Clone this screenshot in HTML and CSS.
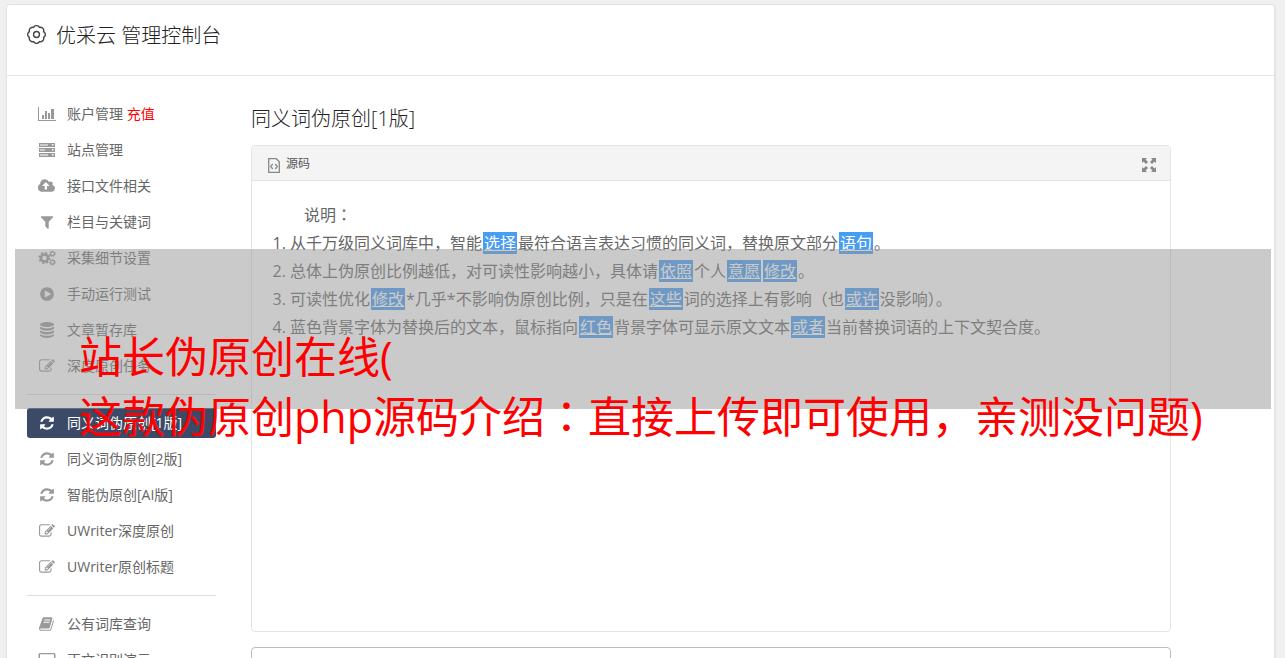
FILE: index.html
```html
<!DOCTYPE html>
<html lang="zh-CN">
<head>
    <meta charset="UTF-8">
    <meta name="viewport" content="width=device-width, initial-scale=1.0">
    <title>优采云 管理控制台</title>
    <link rel="stylesheet" href="styles.css">
</head>
<body>
    <svg class="sprite" aria-hidden="true">
        <symbol id="gear" viewBox="0 0 18 18">
            <path fill="none" stroke="currentColor" stroke-width="1.3" d="M15.74 6.21A3.2 3.2 0 0 1 15.74 11.79A3.2 3.2 0 0 1 11.79 15.74A3.2 3.2 0 0 1 6.21 15.74A3.2 3.2 0 0 1 2.26 11.79A3.2 3.2 0 0 1 2.26 6.21A3.2 3.2 0 0 1 6.21 2.26A3.2 3.2 0 0 1 11.79 2.26A3.2 3.2 0 0 1 15.74 6.21Z"/>
            <circle cx="9" cy="9" r="2.800" fill="none" stroke="currentColor" stroke-width="1.3"/>
        </symbol>
        <symbol id="chart" viewBox="0 0 18 16">
            <path d="M0 1h1v13h17v1H0zM4 9h2v4H4zM7 5h2v8H7zM10 7h2v6h-2zM13 3h3v10h-3z"/>
        </symbol>
        <symbol id="server" viewBox="0 0 18 16">
            <path fill-rule="evenodd" d="M1 1h16v4H1zM1 6h16v4H1zM1 11h16v4H1zM2 2.500h8v1H2zM2 7.500h5v1H2zM2 12.500h8v1H2zM14 2h1.500v1.500H14zM14 7h1.500v1.500H14zM14 12h1.500v1.500H14z"/>
        </symbol>
        <symbol id="cloud" viewBox="0 0 1920 1792">
            <path d="M1216 864q0-14-9-23l-352-352q-9-9-23-9t-23 9l-351 351q-10 12-10 24 0 14 9 23t23 9h224v352q0 13 9.500 22.500t22.500 9.500h192q13 0 22.500-9.500t9.500-22.500v-352h224q13 0 22.500-9.500t9.500-22.500zm640 288q0 159-112.500 271.500t-271.500 112.500h-1088q-185 0-316.500-131.500t-131.500-316.500q0-130 70-240t188-165q-2-30-2-43 0-212 150-362t362-150q156 0 285.500 87t188.500 231q71-62 166-62 106 0 181 75t75 181q0 76-41 138 130 31 213.500 135.500t83.500 238.500z"/>
        </symbol>
        <symbol id="filter" viewBox="0 0 1792 1792">
            <path d="M1595 295q17 41-14 70l-493 493v742q0 42-39 59-13 5-25 5-27 0-45-19l-256-256q-19-19-19-45v-486l-493-493q-31-29-14-70 17-39 59-39h1280q42 0 59 39z"/>
        </symbol>
        <symbol id="cogs" viewBox="0 0 18 16">
            <g fill="none" stroke="currentColor">
                <circle cx="6.500" cy="8" r="3.500" stroke-width="2.600"/>
                <circle cx="6.500" cy="8" r="5.200" stroke-width="1.800" stroke-dasharray="2.040"/>
                <circle cx="14.500" cy="3.700" r="1.900" stroke-width="1.300"/>
                <circle cx="14.500" cy="3.700" r="2.800" stroke-width="1" stroke-dasharray="1.260"/>
                <circle cx="14.500" cy="12.300" r="1.900" stroke-width="1.300"/>
                <circle cx="14.500" cy="12.300" r="2.800" stroke-width="1" stroke-dasharray="1.260"/>
            </g>
        </symbol>
        <symbol id="play" viewBox="0 0 1792 1792">
            <path fill-rule="evenodd" d="M896 128q209 0 385.500 103t279.500 279.500 103 385.500-103 385.500-279.500 279.500-385.500 103-385.500-103-279.500-279.500-103-385.500 103-385.500 279.500-279.500 385.500-103zm384 823q32-18 32-55t-32-55l-544-320q-31-19-64-1-32 19-32 56v640q0 37 32 56 16 8 32 8 17 0 32-9z"/>
        </symbol>
        <symbol id="database" viewBox="0 0 16 16">
            <ellipse cx="8" cy="2.500" rx="7" ry="2.500"/>
            <path d="M1 4.500c2 2.400 12 2.400 14 0v2c-2 3-12 3-14 0zM1 8.300c2 2.400 12 2.400 14 0v2c-2 3-12 3-14 0zM1 12c2 2.400 12 2.400 14 0v1.600c-2 3.200-12 3.200-14 0z"/>
        </symbol>
        <symbol id="edit" viewBox="0 0 1792 1792">
            <path d="M888 1184l116-116-152-152-116 116v56h96v96h56zm440-720q-16-16-33 1l-350 350q-17 17-1 33t33-1l350-350q17-17 1-33zm80 594v190q0 119-84.500 203.500t-203.500 84.500h-832q-119 0-203.500-84.500t-84.500-203.500v-832q0-119 84.500-203.500t203.500-84.500h832q63 0 117 25 15 7 18 23 3 17-9 29l-49 49q-14 14-32 8-23-6-45-6h-832q-66 0-113 47t-47 113v832q0 66 47 113t113 47h832q66 0 113-47t47-113v-126q0-13 9-22l64-64q15-15 35-7t20 29zm-96-738l288 288-672 672h-288v-288zm444 132l-92 92-288-288 92-92q28-28 68-28t68 28l152 152q28 28 28 68t-28 68z"/>
        </symbol>
        <symbol id="refresh" viewBox="0 0 1792 1792">
            <path d="M1639 1056q0 5-1 7-64 268-268 434.500t-478 166.500q-146 0-282.500-55t-243.500-157l-129 129q-19 19-45 19t-45-19-19-45v-448q0-26 19-45t45-19h448q26 0 45 19t19 45-19 45l-137 137q71 66 161 102t187 36q134 0 250-65t186-179q11-17 53-117 8-23 30-23h192q13 0 22.500 9.500t9.500 22.500zm25-800v448q0 26-19 45t-45 19h-448q-26 0-45-19t-19-45 19-45l138-138q-148-137-349-137-134 0-250 65t-186 179q-11 17-53 117-8 23-30 23h-199q-13 0-22.500-9.500t-9.500-22.500v-7q65-268 270-434.500t480-166.500q146 0 284 55.500t245 156.500l130-129q19-19 45-19t45 19 19 45z"/>
        </symbol>
        <symbol id="book" viewBox="0 0 1792 1792">
            <path d="M1639 478q40 57 18 129l-275 906q-19 64-76.500 107.500t-122.500 43.500h-923q-77 0-148.500-53.500t-99.500-131.500q-24-67-2-127 0-4 3-27t4-37q1-8-3-21.500t-3-19.500q2-11 8-21t16.500-23.500 16.500-23.500q23-38 45-91.500t30-91.500q3-10 .5-30t-.5-28q3-11 17-28t17-23q21-36 42-92t25-90q1-9-2.500-32t.5-28q4-13 22-30.500t22-22.500q19-26 42.500-84.500t27.500-96.500q1-8-3-25.500t-2-26.500q2-8 9-18t18-23 17-21q8-12 16.500-30.500t15-35 16-36 19.500-32 26.500-23.500 36-11.500 47.500 5.500l-1 3q38-9 51-9h761q74 0 114 56t18 130l-274 906q-36 119-71.500 153.500t-128.500 34.500h-869q-27 0-38 15-11 16-1 43 24 70 144 70h923q29 0 56-15.500t35-41.500l300-987q7-22 5-57 38 15 59 43zm-1064 2q-4 13 2 22.500t20 9.500h608q13 0 25.500-9.500t16.500-22.500l21-64q4-13-2-22.500t-20-9.500h-608q-13 0-25.500 9.500t-16.500 22.500zm-83 256q-4 13 2 22.500t20 9.500h608q13 0 25.500-9.500t16.500-22.500l21-64q4-13-2-22.500t-20-9.500h-608q-13 0-25.500 9.500t-16.500 22.500z"/>
        </symbol>
        <symbol id="laptop" viewBox="0 0 18 16">
            <path fill-rule="evenodd" d="M2 1h14q1.500 0 1.500 1.500v9H.5v-9Q.5 1 2 1zM2 2.200v8.300h14V2.200zM0 13h18v1.500H0z"/>
        </symbol>
        <symbol id="code-file" viewBox="0 0 12 15">
            <path fill="none" stroke="currentColor" stroke-width="1.300" d="M.7 .7h7.600l3 3v10.600H.7zM4.700 6l-2 2.500 2 2.500M7.300 6l2 2.500-2 2.500"/>
        </symbol>
        <symbol id="expand" viewBox="0 0 14 14">
            <path d="M0 0h5L3.500 1.500 6 4 4 6 1.500 3.500 0 5zM14 0v5l-1.500-1.500L10 6 8 4l2.500-2.500L9 0zM0 14V9l1.500 1.500L4 8l2 2-2.500 2.500L5 14zM14 14H9l1.500-1.500L8 10l2-2 2.500 2.500L14 9z"/>
        </symbol>
    </svg>

    <div class="wrapper">
        <header class="top">
            <svg class="top-icon"><use href="#gear"/></svg>
            <h1>优采云 管理控制台</h1>
        </header>

        <div class="content">
            <nav class="sidebar">
                <ul>
                    <li><a href="#"><svg><use href="#chart"/></svg><span>账户管理 <em>充值</em></span></a></li>
                    <li><a href="#"><svg><use href="#server"/></svg>站点管理</a></li>
                    <li><a href="#"><svg><use href="#cloud"/></svg>接口文件相关</a></li>
                    <li><a href="#"><svg><use href="#filter"/></svg>栏目与关键词</a></li>
                    <li><a href="#"><svg><use href="#cogs"/></svg>采集细节设置</a></li>
                    <li><a href="#"><svg><use href="#play"/></svg>手动运行测试</a></li>
                    <li><a href="#"><svg><use href="#database"/></svg>文章暂存库</a></li>
                    <li><a href="#"><svg><use href="#edit"/></svg>深度原创任务</a></li>
                </ul>
                <ul>
                    <li><a class="active" href="#"><svg><use href="#refresh"/></svg>同义词伪原创[1版]</a></li>
                    <li><a href="#"><svg><use href="#refresh"/></svg>同义词伪原创[2版]</a></li>
                    <li><a href="#"><svg><use href="#refresh"/></svg>智能伪原创[AI版]</a></li>
                    <li><a href="#"><svg><use href="#edit"/></svg>UWriter深度原创</a></li>
                    <li><a href="#"><svg><use href="#edit"/></svg>UWriter原创标题</a></li>
                </ul>
                <ul>
                    <li><a href="#"><svg><use href="#book"/></svg>公有词库查询</a></li>
                    <li><a href="#"><svg><use href="#laptop"/></svg>正文识别演示</a></li>
                </ul>
            </nav>

            <main class="main">
                <h2>同义词伪原创[1版]</h2>
                <section class="editor">
                    <div class="toolbar">
                        <button type="button"><svg class="code-icon"><use href="#code-file"/></svg>源码</button>
                        <button type="button" aria-label="全屏"><svg class="expand-icon"><use href="#expand"/></svg></button>
                    </div>
                    <div class="text">
                        <p>说明<span class="colon" lang="zh-TW">：</span></p>
                        <ol>
                            <li>从千万级同义词库中，智能<mark>选择</mark>最符合语言表达习惯的同义词，替换原文部分<mark>语句</mark>。</li>
                            <li>总体上伪原创比例越低，对可读性影响越小，具体请<mark>依照</mark>个人<mark>意愿</mark><mark>修改</mark>。</li>
                            <li>可读性优化<mark>修改</mark>*几乎*不影响伪原创比例，只是在<mark>这些</mark>词的选择上有影响（也<mark>或许</mark>没影响）。</li>
                            <li>蓝色背景字体为替换后的文本，鼠标指向<mark>红色</mark>背景字体可显示原文文本<mark>或者</mark>当前替换词语的上下文契合度。</li>
                        </ol>
                    </div>
                </section>
                <textarea class="source" aria-label="原文"></textarea>
            </main>
        </div>
    </div>

    <div class="banner">站长伪原创在线(<br>这款伪原创php源码介绍<span class="colon" lang="zh-TW">：</span>直接上传即可使用，亲测没问题)</div>
</body>
</html>
```
FILE: styles.css
```css
* {
    box-sizing: border-box;
}
body {
    margin: 0;
    height: 100vh;
    overflow: hidden;
    background: #f0f0f0;
    color: #666;
    font-family: "Open Sans", "Noto Sans CJK SC", sans-serif;
    font-size: 14px;
}
h1, h2, p, ul, ol {
    margin: 0;
    padding: 0;
}
svg {
    fill: currentColor;
}
.sprite {
    display: none;
}
/* keeps the full-width colon in the middle of its cell */
.colon {
    font-family: "Noto Sans CJK TC", sans-serif;
    line-height: 1;
}
.wrapper {
    margin: 4px 9px 0 6px;
    background: #fff;
    border: 1px solid #e4e4e4;
    border-right-width: 2px;
    border-radius: 4px;
}
.top {
    display: flex;
    align-items: center;
    gap: 10px;
    height: 71px;
    padding: 0 20px 8px;
    border-bottom: 1px solid #e4e4e4;
    color: #444;
}
.top-icon {
    width: 19px;
    height: 19px;
    margin-bottom: 4px;
}
h1, h2 {
    color: #222;
    font-size: 20px;
    font-weight: 300;
    line-height: 30px;
}
.content {
    display: flex;
    gap: 35px;
    padding: 23px 20px;
}

/* sidebar */
.sidebar {
    flex: 0 0 189px;
}
.sidebar ul {
    display: flex;
    flex-direction: column;
    gap: 6px;
    list-style: none;
}
.sidebar ul + ul {
    margin-top: 13px;
    padding-top: 13px;
    border-top: 1px solid #ddd;
}
.sidebar a {
    display: flex;
    align-items: center;
    gap: 11px;
    height: 30px;
    padding: 0 11px;
    border-radius: 3px;
    color: #666;
    line-height: 30px;
    text-decoration: none;
    white-space: nowrap;
}
.sidebar svg {
    width: 18px;
    height: 16px;
    color: #999;
}
.sidebar em {
    color: #f00;
    font-style: normal;
}
.sidebar .active,
.sidebar .active svg {
    color: #fff;
}
.sidebar .active {
    background: #3b4a66;
}

/* editor */
.main {
    flex: 1;
    max-width: 920px;
    padding-top: 5px;
}
.editor {
    margin-top: 11px;
    min-height: 487px;
    border: 1px solid #e4e4e4;
    border-radius: 4px;
    overflow: hidden;
}
.toolbar {
    display: flex;
    justify-content: space-between;
    height: 35px;
    padding: 0 14px 0 16px;
    background: #f4f4f4;
    border-bottom: 1px solid #e4e4e4;
}
.toolbar button {
    display: flex;
    align-items: center;
    gap: 6px;
    padding: 0;
    border: 0;
    background: none;
    color: #555;
    font: inherit;
    font-size: 12px;
}
.toolbar svg {
    color: #888;
    margin-top: 4px;
}
.code-icon {
    width: 12px;
    height: 15px;
}
.expand-icon {
    width: 14px;
    height: 14px;
}
.text {
    padding: 20px;
    font-size: 16px;
    line-height: 28px;
}
.text p {
    text-indent: 32px;
}
.text ol {
    padding-left: 18px;
}
.text mark {
    margin: 0 1px;
    padding: 0 1px;
    background: #479cf3;
    color: #fff;
    line-height: 20px;
    text-decoration: underline;
}
.source {
    display: block;
    width: 100%;
    height: 120px;
    margin-top: 15px;
    border: 1px solid #bbb;
    border-radius: 4px;
    background: #fff;
}

/* red caption laid over the page */
.banner {
    position: absolute;
    top: 249px;
    left: 15px;
    right: 14px;
    height: 160px;
    padding: 78px 0 0 64px;
    background: rgba(150, 150, 150, .5);
    color: #f00;
    font-size: 43px;
    line-height: 60px;
    white-space: nowrap;
}
```
